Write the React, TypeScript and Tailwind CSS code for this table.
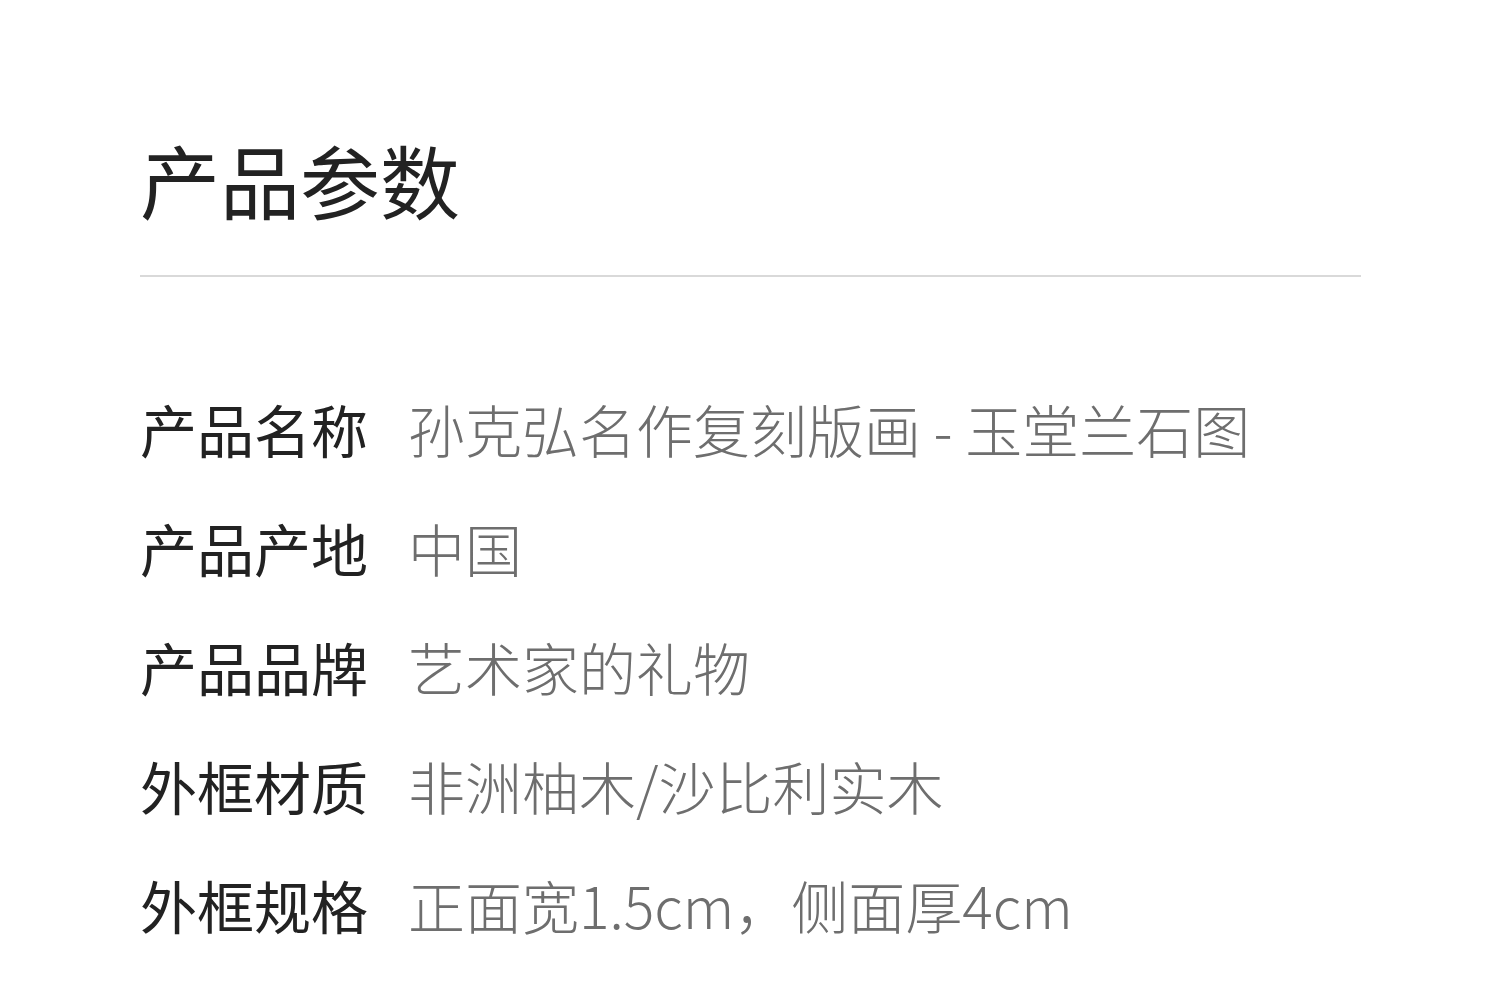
const specs = [
  { label: "产品名称", value: "孙克弘名作复刻版画 - 玉堂兰石图" },
  { label: "产品产地", value: "中国" },
  { label: "产品品牌", value: "艺术家的礼物" },
  { label: "外框材质", value: "非洲柚木/沙比利实木" },
  { label: "外框规格", value: "正面宽1.5cm，侧面厚4cm" },
];

export default function App() {
  return (
    <div
      className="min-h-[1000px] w-[1500px] bg-white px-[140px] pt-[138px]"
      style={{ fontFamily: '"Noto Sans CJK SC", "Noto Sans", sans-serif' }}
    >
      <h1 className="text-[80px] leading-[80px] font-normal text-[#222222]">产品参数</h1>
      <div className="mt-[57px] h-[2px] w-[1221px] bg-[#d9d9d9]" />
      <div className="mt-[92px] flex flex-col">
        {specs.map((s) => (
          <div key={s.label} className="flex h-[119px] items-center gap-[40px] leading-none">
            <span className="text-[57px] font-normal text-[#222222]">{s.label}</span>
            <span className="text-[57px] font-extralight text-[#6e6e6e]">{s.value}</span>
          </div>
        ))}
      </div>
    </div>
  );
}
